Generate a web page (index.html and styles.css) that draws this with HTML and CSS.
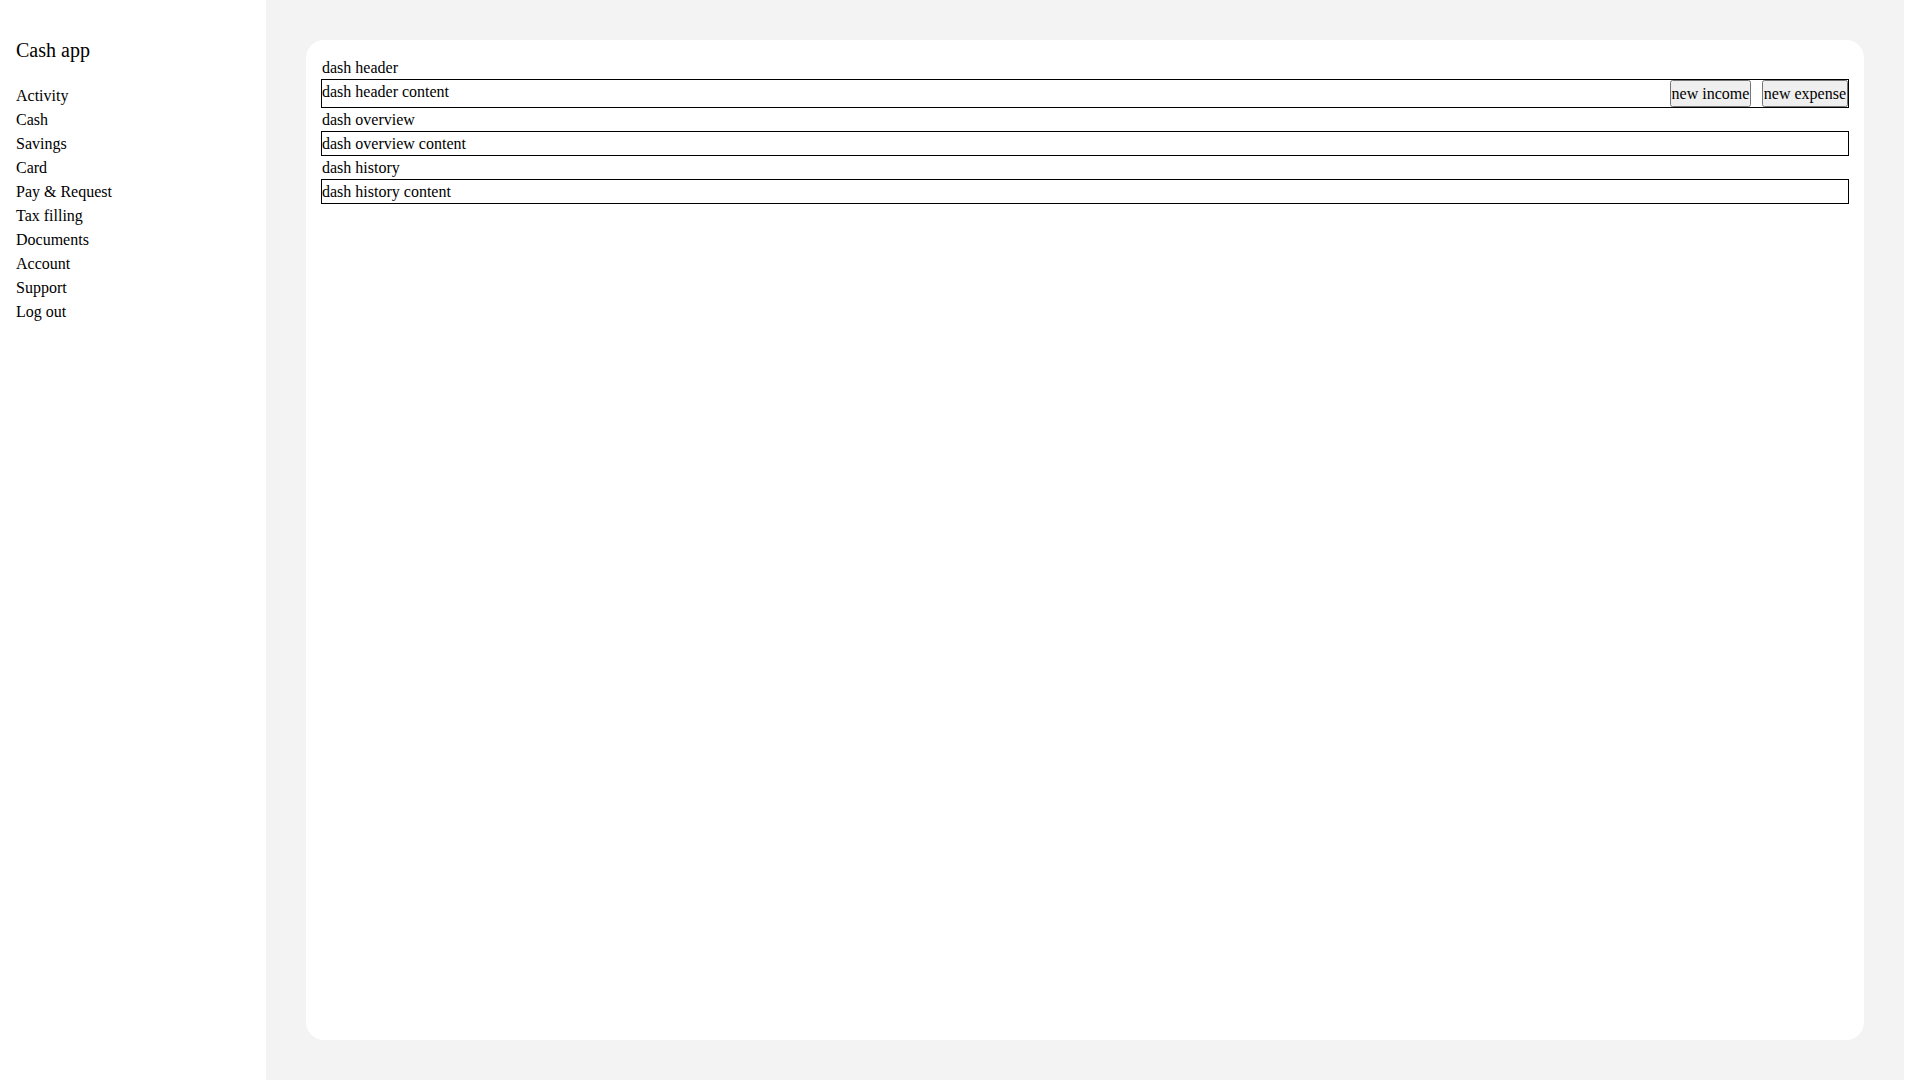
FILE: index.html
```html
<!DOCTYPE html>
<html lang="en">
<head>
<meta charset="utf-8">
<title>Cash app</title>
<link rel="stylesheet" href="styles.css">
</head>
<body>
<div class="layout">
  <aside class="sidebar">
    <h1 class="brand">Cash app</h1>
    <ul class="nav">
      <li>Activity</li>
      <li>Cash</li>
      <li>Savings</li>
      <li>Card</li>
      <li>Pay &amp; Request</li>
      <li>Tax filling</li>
      <li>Documents</li>
      <li>Account</li>
      <li>Support</li>
      <li>Log out</li>
    </ul>
  </aside>
  <main class="main">
    <section class="card">
      <div class="label">dash header</div>
      <div class="box box-header">
        <div class="box-text">dash header content</div>
        <div class="actions">
          <button class="btn" type="button">new income</button>
          <button class="btn" type="button">new expense</button>
        </div>
      </div>
      <div class="label">dash overview</div>
      <div class="box">dash overview content</div>
      <div class="label">dash history</div>
      <div class="box">dash history content</div>
    </section>
  </main>
</div>
</body>
</html>
```

FILE: styles.css
```css
html, body {
  margin: 0;
  padding: 0;
  background: #ffffff;
}

body {
  font-family: "Liberation Serif", "Times New Roman", serif;
  font-size: 16px;
  color: #000000;
}

.layout {
  display: grid;
  grid-template-columns: 266px 1638px;
  height: 1080px;
}

.sidebar {
  background: #ffffff;
  padding: 39px 16px 16px 16px;
}

.brand {
  margin: 0 0 22px 0;
  font-size: 20px;
  font-weight: normal;
  line-height: 23px;
}

.nav {
  list-style: none;
  margin: 0;
  padding: 0;
  line-height: 24px;
}

.main {
  background: #f3f3f3;
  padding: 40px;
}

.card {
  background: #ffffff;
  border-radius: 18px;
  height: 1000px;
  box-sizing: border-box;
  padding: 16px 15px;
  line-height: 23px;
}

.label {
  padding-left: 1px;
}

.box {
  border: 1px solid #000000;
}

.box-header {
  display: flex;
  justify-content: space-between;
}

.actions {
  display: flex;
  gap: 10.5px;
}

.btn {
  font: inherit;
  line-height: 23px;
  padding: 0;
  margin: 0;
  color: #000000;
}
```
